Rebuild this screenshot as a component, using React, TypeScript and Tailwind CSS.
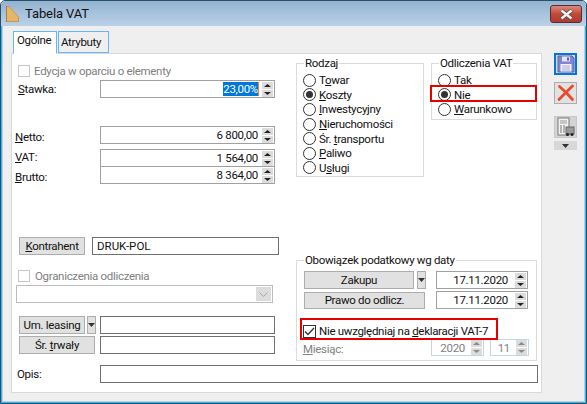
import React from "react";

const font = { fontFamily: 'Roboto, sans-serif' };

function Arrows({ dim = false }: { dim?: boolean }) {
  const c = dim ? "#8a8a8a" : "#222";
  return (
    <svg width="11" height="15" viewBox="0 0 11 15" className="block shrink-0">
      <rect x="0" y="0" width="11" height="7" fill="#dcdcdc" />
      <rect x="0" y="8" width="11" height="7" fill="#dcdcdc" />
      <path d="M5.5 2 L9 5 H2 Z" fill={c} />
      <path d="M5.5 13 L9 10 H2 Z" fill={c} />
    </svg>
  );
}

function Spin({ value, className, sel = false, gap = "mr-[4px]" }: { value: string; className: string; sel?: boolean; gap?: string }) {
  return (
    <div className={`flex items-center justify-end bg-white border border-[#a0a0a0] pr-[1px] ${className}`}>
      {sel ? (
        <span className="bg-[#0078d7] text-white border-r border-[#ff7a1a] leading-[14px] mr-[3px]">{value}</span>
      ) : (
        <span className={`leading-[14px] text-[#111] ${gap}`}>{value}</span>
      )}
      <Arrows />
    </div>
  );
}

function Btn({ children, className }: { children: React.ReactNode; className: string }) {
  return (
    <div className={`flex items-center justify-center whitespace-nowrap bg-[#e1e1e1] border border-[#adadad] text-[#111] ${className}`}>
      {children}
    </div>
  );
}

function Caret() {
  return (
    <svg width="7" height="4" viewBox="0 0 7 4">
      <path d="M0 0H7L3.5 4Z" fill="#333" />
    </svg>
  );
}

function Radio({ label, on = false }: { label: React.ReactNode; on?: boolean }) {
  return (
    <div className="flex items-center h-[14.6px] leading-[14px] text-[#111]">
      <span className="flex items-center justify-center w-[13px] h-[13px] rounded-full border border-[#333] bg-white mr-[3px] shrink-0">
        {on && <span className="w-[7px] h-[7px] rounded-full bg-[#333]" />}
      </span>
      {label}
    </div>
  );
}

function Group({ title, className, children }: { title: string; className: string; children: React.ReactNode }) {
  return (
    <div className={`relative border border-[#dcdcdc] bg-white ${className}`}>
      <span className="absolute left-[7px] top-[-9px] bg-white px-[1px] leading-[16px] text-[#111] whitespace-nowrap">{title}</span>
      {children}
    </div>
  );
}

function Disk() {
  return (
    <svg width="18" height="18" viewBox="0 0 18 18">
      <path d="M1 1H15L17 3V17H1Z" fill="#7f86d8" stroke="#5a60b0" />
      <rect x="5" y="1.5" width="8" height="5" fill="#e6e6f4" />
      <rect x="10" y="2.5" width="2" height="3" fill="#5a60b0" />
      <rect x="3.5" y="9" width="11" height="7.5" fill="#f2f2fa" />
      <path d="M5 11H13M5 13H13M5 15H13" stroke="#a8acd8" />
    </svg>
  );
}

function Cross() {
  return (
    <svg width="18" height="18" viewBox="0 0 18 18">
      <path d="M2.5 2.5 Q9 8 15.5 15.5 M15.5 2 Q9 8 2 15.5" fill="none" stroke="#ea4a2a" strokeWidth="2.8" strokeLinecap="round" />
    </svg>
  );
}

function Building() {
  return (
    <svg width="20" height="20" viewBox="0 0 20 20">
      <rect x="2" y="1" width="11" height="17" fill="#f2f2f2" stroke="#777" />
      <path d="M4 4H11M4 6H11" stroke="#999" />
      <path d="M4 9H6M7 9H9M4 11H6M7 11H9M4 13H6M7 13H9M4 15H6M7 15H9" stroke="#777" />
      <rect x="10" y="10" width="8" height="7" fill="#9a9a9a" stroke="#666" />
      <circle cx="11.5" cy="17.5" r="1.5" fill="#222" />
      <circle cx="16" cy="17.5" r="1.5" fill="#222" />
    </svg>
  );
}

export default function App() {
  return (
    <div className="w-[587px] h-[404px] overflow-hidden bg-[#efefef] text-[11.5px] leading-[16px] tracking-[-0.3px] flex flex-col border border-[#24506e] rounded-t-[5px]" style={font}>
      <div className="h-[25px] shrink-0 flex items-center pl-[5px] pr-[4px] bg-gradient-to-b from-[#94b3cf] to-[#bad2e9]">
        <svg width="13" height="16" viewBox="0 0 13 16" className="mr-[6px] shrink-0">
          <path d="M0 0H3L13 11V16H0Z" fill="#c9964f" />
          <path d="M1 1H3L12 11V15H1Z" fill="#e6b668" />
          <path d="M0 0V16" stroke="#8a6a3a" />
        </svg>
        <span className="text-[13px] tracking-[-0.1px] text-[#111]">Tabela VAT</span>
        <div className="ml-auto self-start mt-[4px] w-[32px] h-[18px] rounded-[3px] border border-[#5a2a30] bg-gradient-to-b from-[#d98a7c] via-[#c0493a] to-[#b03a2e] flex items-center justify-center">
          <svg width="15" height="11" viewBox="0 0 15 11">
            <path d="M2.5 1.5 L12.5 9.5 M12.5 1.5 L2.5 9.5" stroke="#444" strokeWidth="3.6" />
            <path d="M2.5 1.5 L12.5 9.5 M12.5 1.5 L2.5 9.5" stroke="#f5f5f5" strokeWidth="2.4" />
          </svg>
        </div>
      </div>

      <div className="flex-1 flex border-x border-b border-[#35b4ee]">
        <div className="flex-1 flex border-x border-b border-[#b8cfe2] pl-[8px]">
          <div className="w-[531px] flex flex-col">
            <div className="flex items-end h-[27px] pl-[2px]">
              <div className="relative z-10 w-[44px] h-[23px] mb-[-1px] bg-white border border-[#66b5ff] border-b-white px-[3px] text-[#111]">Ogólne</div>
              <div className="w-[51px] h-[22px] ml-[1px] bg-[#efefef] border border-[#66b5ff] pl-[2px] pt-[2px] text-[#111]">Atrybuty</div>
            </div>
            <div className="flex-1 bg-white border border-[#d9d9d9]">
              <div className="flex h-[308px]">
                <div className="w-[284px] shrink-0 flex flex-col pl-[3px]">
                  <div className="flex items-center mt-[10px] ml-[3px] h-[13px] text-[#808080]">
                    <span className="w-[12px] h-[12px] border border-[#c8c8c8] mr-[4px]" />
                    Edycja w oparciu o elementy
                  </div>
                  <div className="flex items-center h-[18px] mt-[3px]">
                    <span className="w-[85px] pl-[3px] text-[#111]"><u>S</u>tawka:</span>
                    <Spin value="23,00%" sel className="w-[175px] h-[18px]" />
                  </div>
                  <div className="flex items-center h-[18px] mt-[28px]">
                    <span className="w-[85px] pt-[4px] text-[#111]"><u>N</u>etto:</span>
                    <Spin value="6 800,00" className="w-[175px] h-[18px]" />
                  </div>
                  <div className="flex items-center h-[18px] mt-[5px]">
                    <span className="w-[85px] pb-[2px] text-[#111]"><u>V</u>AT:</span>
                    <Spin value="1 564,00" className="w-[175px] h-[18px]" />
                  </div>
                  <div className="flex items-center h-[18px] mt-[-1px]">
                    <span className="w-[85px] pt-[4px] text-[#111]"><u>B</u>rutto:</span>
                    <Spin value="8 364,00" className="w-[175px] h-[18px]" />
                  </div>
                  <div className="flex items-center mt-[53px] ml-[4px]">
                    <Btn className="w-[66px] h-[18px]"><span><u>K</u>ontrahent</span></Btn>
                    <div className="ml-[7px] w-[187px] h-[18px] border border-[#707070] bg-white pl-[4px] leading-[16px] text-[#111] tracking-[0px]">DRUK-POL</div>
                  </div>
                  <div className="flex items-center mt-[14px] ml-[3px] h-[13px] text-[#808080]">
                    <span className="w-[12px] h-[12px] border border-[#c8c8c8] mr-[5px]" />
                    Ograniczenia odliczenia
                  </div>
                  <div className="flex items-center justify-end mt-[3px] ml-[1px] w-[257px] h-[18px] border border-[#bdbdbd] bg-white pr-[1px]">
                    <div className="w-[15px] h-[14px] bg-[#dcdcdc] flex items-center justify-center">
                      <svg width="9" height="5" viewBox="0 0 9 5"><path d="M0.5 0.5L4.5 4.5L8.5 0.5" fill="none" stroke="#a8a8a8" /></svg>
                    </div>
                  </div>
                  <div className="flex items-center mt-[13px] ml-[4px]">
                    <Btn className="w-[66px] h-[18px]">Um. leasing</Btn>
                    <Btn className="w-[9px] h-[18px] ml-[2px]"><Caret /></Btn>
                    <div className="ml-[4px] w-[175px] h-[18px] border border-[#707070] bg-white" />
                  </div>
                  <div className="flex items-center mt-[2px] ml-[4px]">
                    <Btn className="w-[76px] h-[18px]"><span>Śr. <u>t</u>rwały</span></Btn>
                    <div className="ml-[5px] w-[175px] h-[18px] border border-[#707070] bg-white" />
                  </div>
                </div>

                <div className="flex-1 flex flex-col">
                  <div className="flex mt-[9px]">
                    <Group title="Rodzaj" className="w-[128px] h-[114px] pl-[6px] pt-[9px]">
                      <Radio label={<span>T<u>o</u>war</span>} />
                      <Radio on label={<span><u>K</u>oszty</span>} />
                      <Radio label={<span><u>I</u>nwestycyjny</span>} />
                      <Radio label={<span><u>N</u>ieruchomości</span>} />
                      <Radio label={<span>Śr. <u>t</u>ransportu</span>} />
                      <Radio label={<span><u>P</u>aliwo</span>} />
                      <Radio label={<span>U<u>s</u>ługi</span>} />
                    </Group>
                    <Group title="Odliczenia VAT" className="w-[106px] h-[57px] ml-[7px] pl-[6px] pt-[9px]">
                      <Radio label={<span><u>T</u>ak</span>} />
                      <Radio on label={<span><u>N</u>ie</span>} />
                      <Radio label={<span><u>W</u>arunkowo</span>} />
                      <div className="absolute left-[-2px] right-[-1px] top-[21px] h-[17px] border-2 border-[#e60000] pointer-events-none" />
                    </Group>
                  </div>
                  <Group title="Obowiązek podatkowy wg daty" className="w-[241px] h-[101px] mt-[83px] pl-[7px] pt-[10px]">
                    <div className="flex items-center">
                      <Btn className="w-[110px] h-[18px]">Zakupu</Btn>
                      <Btn className="w-[9px] h-[18px] ml-[3px]"><Caret /></Btn>
                      <Spin value="17.11.2020" gap="mr-[7px]" className="w-[92px] h-[18px] ml-[10px]" />
                    </div>
                    <div className="flex items-center mt-[2px]">
                      <Btn className="w-[121px] h-[17px]">Prawo do odlicz.</Btn>
                      <Spin value="17.11.2020" gap="mr-[7px]" className="w-[92px] h-[18px] ml-[11px]" />
                    </div>
                    <div className="relative flex items-center mt-[14px] h-[16px] text-[#111] -ml-[1px]">
                      <span className="flex items-center justify-center w-[13px] h-[13px] border border-[#333] bg-white mr-[3px]">
                        <svg width="11" height="9" viewBox="0 0 11 9"><path d="M1 4.5L4 7.5L10 1" fill="none" stroke="#333" strokeWidth="1.3" /></svg>
                      </span>
                      <span>Nie uwzględniaj na <u>d</u>eklaracji VAT-7</span>
                      <div className="absolute left-[-3px] top-[-5px] w-[198px] h-[22px] border-2 border-[#e60000]" />
                    </div>
                    <div className="flex items-center mt-[2px] -ml-[1px] text-[#808080]">
                      <span className="w-[128px]"><u>M</u>iesiąc:</span>
                      <div className="flex items-center justify-end w-[53px] h-[17px] border border-[#c5d5e8] pr-[1px] mt-[-3px]"><span className="mr-[6px]">2020</span><Arrows dim /></div>
                      <div className="flex items-center justify-end w-[39px] h-[17px] ml-[6px] border border-[#c5d5e8] pr-[1px] mt-[-3px]"><span className="mr-[6px]">11</span><Arrows dim /></div>
                    </div>
                  </Group>
                </div>
              </div>
              <div className="flex items-center mt-[3px] pl-[5px]">
                <span className="w-[83px] text-[#111]">Opis:</span>
                <div className="w-[438px] h-[18px] border border-[#707070] bg-white" />
              </div>
            </div>
            <div className="h-[8px]" />
          </div>
          <div className="flex flex-col pl-[12px] pt-[27px]">
            <div className="w-[23px] h-[22px] border-2 border-[#0078d7] bg-[#d8d8d8] flex items-center justify-center"><Disk /></div>
            <div className="w-[23px] h-[22px] mt-[7px] border border-[#adadad] bg-[#e1e1e1] flex items-center justify-center"><Cross /></div>
            <div className="w-[23px] h-[22px] mt-[12px] border border-[#c8c8c8] bg-[#d4d4d4] flex items-center justify-center"><Building /></div>
            <div className="w-[23px] h-[9px] mt-[3px] bg-[#d8d8d8] flex items-center justify-center"><Caret /></div>
          </div>
        </div>
      </div>
    </div>
  );
}
